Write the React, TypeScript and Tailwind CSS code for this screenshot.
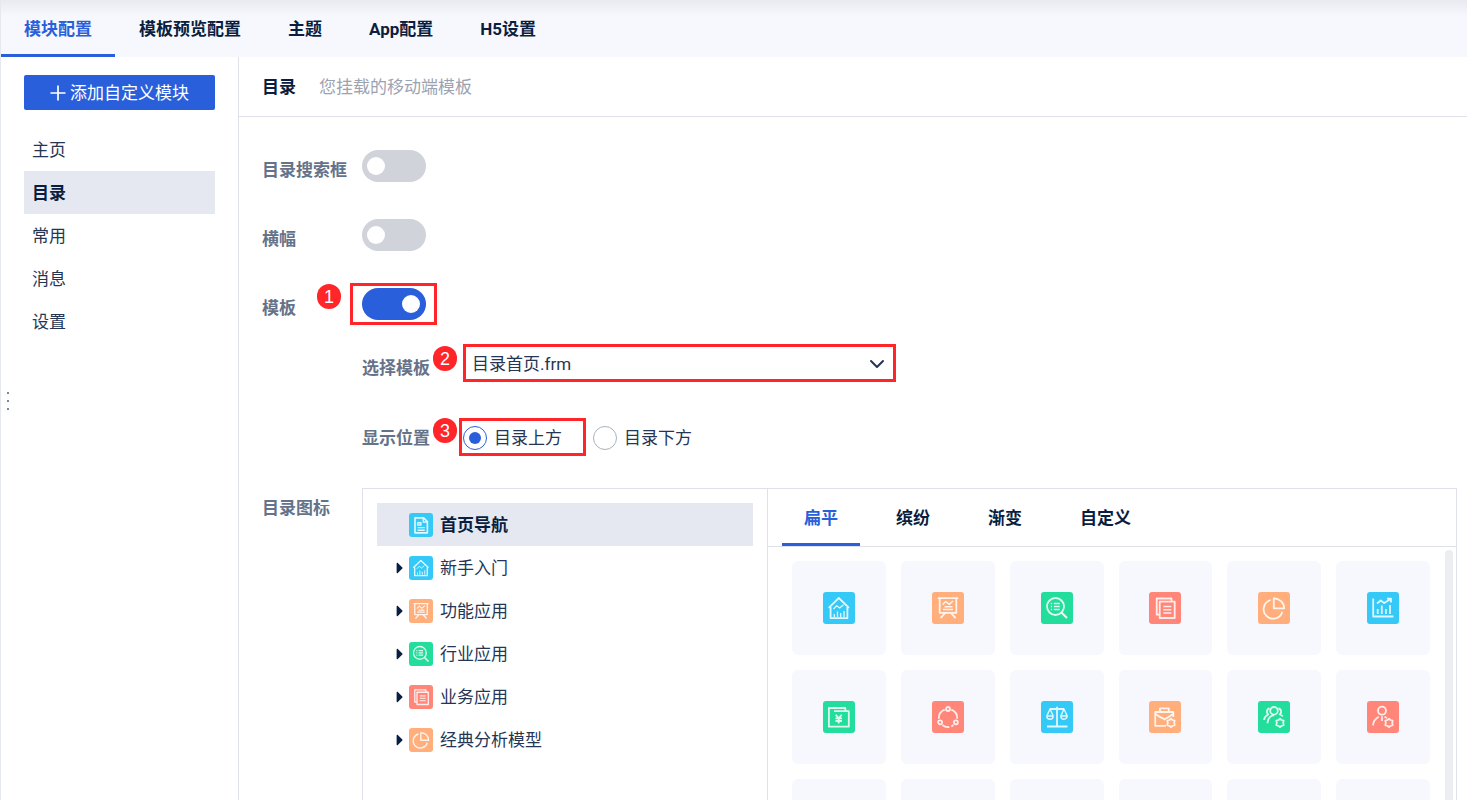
import React from 'react'
import { FaCaretRight } from 'react-icons/fa'
import { FiChevronDown } from 'react-icons/fi'

const tabs = ['模块配置', '模板预览配置', '主题', 'App配置', 'H5设置']
const menu = ['主页', '目录', '常用', '消息', '设置']
const iconTabs = ['扁平', '缤纷', '渐变', '自定义']

const gear = <path d="M22 17.8l1.5 1.2 2.2.6-.5 2.3.5 2.3-2.2.6L22 26.2l-1.5-1.4-2.2-.6.5-2.3-.5-2.3 2.2-.6z" />

const glyphs = {
  doc: (
    <>
      <path d="M8 6.5h11.5l5 5v15H8z" strokeWidth="2.2" />
      <path d="M19 7v5h5M11.500 13h4.500v3h-4.500zM11.500 19.5h9.500M11.500 23h9.500" />
    </>
  ),
  house: (
    <>
      <path d="M5.7 15.8L15.8 6l10.2 9.8M7.6 15v11.200h16.800V15" />
      <path d="M10.5 17l3.200-3.300 3 2.400 3.800-3.300M11.300 25v-3M14.500 25v-5.500M17.700 25v-4M21 25v-6" strokeWidth="1.300" />
    </>
  ),
  board: (
    <>
      <path d="M5.7 6.2h20.6M7.7 6.500v14.300h16.600V6.500M13.200 21l-4.700 5.200M18.900 21l4.700 5.200" />
      <path d="M10.5 12.700l3.200-3.200 3.500 2.900L21 9M12.500 14.800h8M11 17.500h10" strokeWidth="1.500" />
    </>
  ),
  search: (
    <>
      <circle cx="14.5" cy="14.5" r="8.5" />
      <path d="M20.7 20.7l5.300 5.300" strokeWidth="2.2" />
      <path d="M9.8 11.500h1.300M12.800 11.500h6M9.800 14.500h1.300M12.800 14.500h6M9.800 17.500h1.300M12.800 17.500h6" strokeWidth="1.500" />
    </>
  ),
  copy: (
    <>
      <path d="M10.5 22.700h-2.800V6.500h14.800v3M10.700 9.700h15V26h-15z" />
      <path d="M14.3 14.500h8M14.300 17.700h8M14.300 21h8" strokeWidth="1.400" />
    </>
  ),
  pie: (
    <>
      <path d="M15.8 6.300v10h10.400A10.200 10.200 0 0 0 15.800 6.300z" />
      <path d="M12.6 8A9.500 9.500 0 1 0 24.300 19.700" />
    </>
  ),
  chart: (
    <>
      <path d="M6.2 6.500v18h20.300" />
      <path d="M10.7 22v-5M14.800 22v-8.500M18.900 22v-5M23 22v-9M10 11.500l3.700-3 3.500 2.500L23 7.500M20 6.700h4v3.800" />
    </>
  ),
  wallet: (
    <>
      <path d="M22.3 9.800V7H5.900v18.700h19.900V10.200H11" />
      <path d="M12.7 13.700l3 3.700 3-3.700M15.700 17.400v5M12.500 17.400h6.400M12.500 20h6.400" />
    </>
  ),
  cycle: (
    <>
      <circle cx="16" cy="8" r="2" />
      <circle cx="8.1" cy="21.300" r="2" />
      <circle cx="23.9" cy="21.300" r="2" />
      <path d="M12.7 8.600a9.300 9.300 0 0 0-5.900 9.200M19.300 8.600a9.300 9.300 0 0 1 5.900 9.200M10.300 24a9.300 9.300 0 0 0 7 2M19.300 25.400l2.200-1.300" />
    </>
  ),
  scales: (
    <>
      <path d="M16 5.700v19.600M6 25.500h20.500M9 8h14" />
      <path d="M9 8l-3.200 7h6.400zM23 8l-3.200 7h6.400zM5.800 15a3.200 3.200 0 0 0 6.400 0M19.800 15a3.200 3.200 0 0 0 6.400 0" strokeWidth="1.400" />
    </>
  ),
  briefcase: (
    <>
      <path d="M17 24.800H6.200V11h18.100v5M11 10.800V7.300h8.800v3.500" />
      <path d="M6.5 13l6.500 4.200M24 13l-6.200 4.200M13 16.500l2.500 2 2.500-2" />
      {gear}
    </>
  ),
  group: (
    <>
      <circle cx="16" cy="9.800" r="3.800" />
      <path d="M16 14c-4 .8-6.300 3.700-6.500 8.300M11.500 7.500c-2.700.2-3.500 4.200-1.300 6-2.700 1.300-3.900 3.300-4.200 5.500M20.500 7.500c2.700.2 3.500 4.200 1.300 6 1.400.4 2.300 1 3 1.800" />
      {gear}
    </>
  ),
  person: (
    <>
      <circle cx="15" cy="9.700" r="4" />
      <path d="M11.7 15.800c-3.300 1.700-5.300 4.800-5.700 8.500M15 15.200v4.800M17.500 15.800l2.500 1.200" />
      {gear}
    </>
  ),
}

type Glyph = keyof typeof glyphs

const Tile = ({ name, color, size }: { name: Glyph; color: string; size: string }) => (
  <svg
    viewBox="0 0 32 32"
    className={`${color} ${size} shrink-0 rounded-[3px]`}
    fill="none"
    stroke="white"
    strokeWidth="1.800"
    strokeOpacity="0.850"
    strokeLinejoin="round"
    aria-hidden="true"
  >
    {glyphs[name]}
  </svg>
)

const blue = 'bg-[#35c9f7]'
const orange = 'bg-[#ffae7c]'
const green = 'bg-[#22dd9b]'
const red = 'bg-[#ff8678]'

const tree: { label: string; icon: Glyph; color: string }[] = [
  { label: '首页导航', icon: 'doc', color: blue },
  { label: '新手入门', icon: 'house', color: blue },
  { label: '功能应用', icon: 'board', color: orange },
  { label: '行业应用', icon: 'search', color: green },
  { label: '业务应用', icon: 'copy', color: red },
  { label: '经典分析模型', icon: 'pie', color: orange },
]

const icons: { icon: Glyph; color: string }[] = [
  { icon: 'house', color: blue },
  { icon: 'board', color: orange },
  { icon: 'search', color: green },
  { icon: 'copy', color: red },
  { icon: 'pie', color: orange },
  { icon: 'chart', color: blue },
  { icon: 'wallet', color: green },
  { icon: 'cycle', color: red },
  { icon: 'scales', color: blue },
  { icon: 'briefcase', color: orange },
  { icon: 'group', color: green },
  { icon: 'person', color: red },
]

const Switch = ({ id, on }: { id: string; on?: boolean }) => (
  <input
    id={id}
    type="checkbox"
    role="switch"
    defaultChecked={on}
    className="block h-8 w-16 appearance-none rounded-full bg-[#d0d3da] before:ml-[5px] before:mt-[7px] before:block before:size-[18px] before:rounded-full before:bg-white checked:bg-[#2a5fdb] checked:before:ml-10"
  />
)

const Badge = ({ n, place }: { n: number; place: string }) => (
  <span
    className={`absolute ${place} flex h-[25px] w-6 items-center justify-center rounded-full bg-[#ff2529] font-['Liberation_Sans'] text-lg text-white`}
  >
    {n}
  </span>
)

const rowLabel = 'shrink-0 pt-2 font-bold text-[#65738a]'

const App = () => {
  return (
    <div className="flex h-screen flex-col overflow-hidden border-l border-[#e6e8ef] bg-white font-[Roboto,'Noto_Sans_CJK_SC',sans-serif] text-[17px] leading-6 text-[#253654]">
      <header className="shrink-0 bg-[#f7f8fd] bg-linear-to-b from-[#e9eaef] to-[#f7f8fd] to-[16px]">
        <nav className="flex gap-px">
          {tabs.map((tab, i) => (
            <a
              key={tab}
              href="#"
              className={`flex h-[57px] items-center border-b-3 px-[23px] pt-[3px] font-bold ${
                i === 0 ? 'border-[#2a5fdb] text-[#2a5fdb]' : 'border-transparent text-[#091e40]'
              }`}
            >
              {tab}
            </a>
          ))}
        </nav>
      </header>

      <div className="flex min-h-0 flex-1">
        <aside className="relative w-[238px] shrink-0 border-r border-[#dfe1ea] px-[23px] pt-[18px]">
          <button className="flex h-[35px] w-full items-center justify-center gap-1 rounded-xs bg-[#2a5fdb] text-white">
            <svg viewBox="0 0 16 16" className="size-4" stroke="currentColor" strokeWidth="1.700" aria-hidden="true">
              <path d="M8 0.500v15M0.500 8h15" />
            </svg>
            添加自定义模块
          </button>
          <ul className="mt-[18px]">
            {menu.map((item) => (
              <li key={item}>
                <a
                  href="#"
                  className={`flex h-[43px] items-center px-2 ${
                    item === '目录' ? 'bg-[#e5e8f0] font-bold text-[#091e40]' : ''
                  }`}
                >
                  {item}
                </a>
              </li>
            ))}
          </ul>
          <div className="absolute top-[335px] left-[6px] flex flex-col gap-[6px]">
            <span className="size-[2px] bg-[#7c889c]"></span>
            <span className="size-[2px] bg-[#7c889c]"></span>
            <span className="size-[2px] bg-[#7c889c]"></span>
          </div>
        </aside>

        <main className="flex min-w-0 flex-1 flex-col">
          <div className="flex h-[60px] shrink-0 items-center gap-[23px] border-b border-[#dfe1ea] px-[23px]">
            <h1 className="font-bold text-[#091e40]">目录</h1>
            <p className="text-[#9ba3b1]">您挂载的移动端模板</p>
          </div>

          <form className="flex min-h-0 flex-1 flex-col pt-[33px] pr-[10px] pl-[23px]">
            <div className="flex h-[69px] shrink-0 items-start">
              <label htmlFor="search" className={`${rowLabel} w-[100px]`}>
                目录搜索框
              </label>
              <Switch id="search" />
            </div>
            <div className="flex h-[69px] shrink-0 items-start">
              <label htmlFor="banner" className={`${rowLabel} w-[100px]`}>
                横幅
              </label>
              <Switch id="banner" />
            </div>
            <div className="relative flex h-[60px] shrink-0 items-start">
              <label htmlFor="template" className={`${rowLabel} w-[100px]`}>
                模板
              </label>
              <Switch id="template" on />
              <Badge n={1} place="-top-1 left-[55px]" />
              <span className="pointer-events-none absolute -top-[5px] left-[88px] h-[42px] w-[87px] border-3 border-[#ff2529]"></span>
            </div>
            <div className="relative ml-[100px] flex h-[70px] shrink-0 items-start">
              <label htmlFor="frm" className={`${rowLabel} w-[101px]`}>
                选择模板
              </label>
              <Badge n={2} place="-top-[2px] left-[71px]" />
              <div className="relative -mt-1 w-[433px]">
                <select
                  id="frm"
                  className="h-[38px] w-full appearance-none border-3 border-[#ff2529] bg-white pt-px pl-[6px]"
                >
                  <option>目录首页.frm</option>
                </select>
                <FiChevronDown className="pointer-events-none absolute top-2 right-[7px] size-6" />
              </div>
            </div>
            <div className="relative ml-[100px] flex h-[70px] shrink-0 items-start">
              <span className={`${rowLabel} w-[101px]`}>显示位置</span>
              <Badge n={3} place="top-0 left-[71px]" />
              <div className="relative flex h-10 items-center" role="radiogroup" aria-label="显示位置">
                {['目录上方', '目录下方'].map((item, i) => (
                  <label key={item} className="flex w-[130px] items-center gap-[7px]">
                    <input
                      type="radio"
                      name="position"
                      defaultChecked={i === 0}
                      className="flex size-6 appearance-none items-center justify-center rounded-full border border-[#a9b1c0] checked:border-[#2a5fdb] checked:before:size-3 checked:before:rounded-full checked:before:bg-[#2a5fdb]"
                    />
                    {item}
                  </label>
                ))}
                <span className="pointer-events-none absolute top-0 -left-1 h-[38px] w-[127px] border-3 border-[#ff2529]"></span>
              </div>
            </div>

            <div className="flex min-h-0 flex-1">
              <span className={`${rowLabel} w-[100px]`}>目录图标</span>
              <div className="flex min-w-0 flex-1 border border-b-0 border-[#dfe1ea]">
                <ul className="w-[405px] shrink-0 border-r border-[#dfe1ea] p-[14px]">
                  {tree.map((node, i) => (
                    <li
                      key={node.label}
                      className={`flex h-[43px] items-center pl-[14px] ${
                        i === 0 ? 'bg-[#e5e8f0] font-bold text-[#091e40]' : ''
                      }`}
                    >
                      <span className="w-[18px]">
                        {i > 0 && <FaCaretRight className="size-[18px] text-[#091e40]" />}
                      </span>
                      <Tile name={node.icon} color={node.color} size="size-6" />
                      <span className="ml-[7px]">{node.label}</span>
                    </li>
                  ))}
                </ul>

                <div className="flex min-w-0 flex-1 flex-col">
                  <div className="flex shrink-0 gap-[14px] border-b border-[#dfe1ea] pl-[14px]">
                    {iconTabs.map((tab, i) => (
                      <button
                        key={tab}
                        type="button"
                        className={`h-[57px] border-b-3 px-[22px] pt-[3px] font-bold ${
                          i === 0 ? 'border-[#2a5fdb] text-[#2a5fdb]' : 'border-transparent text-[#091e40]'
                        }`}
                      >
                        {tab}
                      </button>
                    ))}
                  </div>
                  <div className="relative min-h-0 flex-1 overflow-hidden pt-[14px] pr-[26px] pl-6">
                    <div className="grid grid-cols-6 gap-[15px]">
                      {icons.map(({ icon, color }) => (
                        <button
                          key={icon}
                          type="button"
                          aria-label={icon}
                          className="flex h-[94px] items-center justify-center rounded-md bg-[#f7f8fd]"
                        >
                          <Tile name={icon} color={color} size="size-8" />
                        </button>
                      ))}
                      {/* next row, still below the fold */}
                      {[0, 1, 2, 3, 4, 5].map((i) => (
                        <div key={i} className="h-[94px] rounded-md bg-[#f7f8fd]"></div>
                      ))}
                    </div>
                    <div className="absolute top-[3px] right-[3px] bottom-0 w-2 rounded-t-full bg-[#ecedf1]"></div>
                  </div>
                </div>
              </div>
            </div>
          </form>
        </main>
      </div>
    </div>
  )
}

export default App
